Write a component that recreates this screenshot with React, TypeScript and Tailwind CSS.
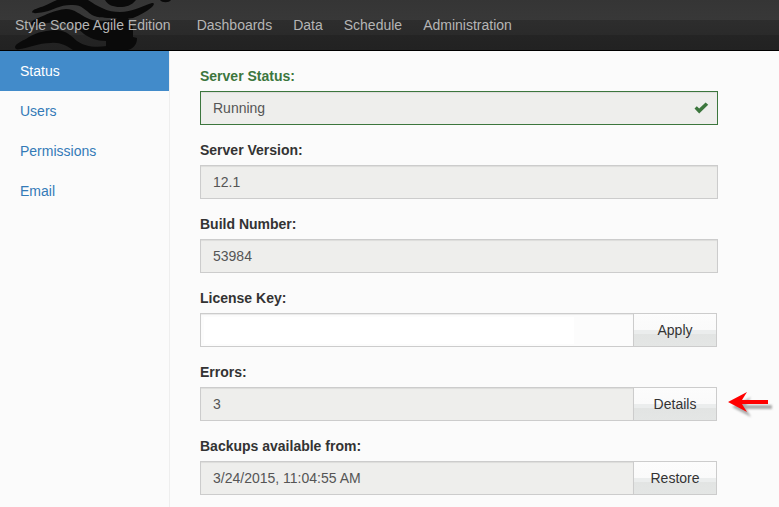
import type { ReactNode } from "react";

const fieldBase =
  "block h-[34px] w-full min-w-0 border px-3 py-1.5 text-sm leading-5 text-[#555] shadow-[inset_0_1px_1px_rgba(0,0,0,0.075)] outline-none";

const navItems = ["Dashboards", "Data", "Schedule", "Administration"];
const sideItems = ["Status", "Users", "Permissions", "Email"];

function Logo() {
  return (
    <svg
      className="absolute left-0 top-0 h-[50px] w-[190px]"
      viewBox="0 0 190 50"
      fill="#0a0a0a"
      aria-hidden="true"
    >
      <path d="M32 12 C33 9 39 8 44 6 C49 4 52 2 57 0 H88 C93 3 97 6 102 8 C108 11 114 12 120 12 C132 12 142 6 152 3 C155 3 154 5 152 7 C146 12 140 15 133 18 C128 19 122 19 115 18 C105 18 98 18 92 15 C85 10 82 5 73 5 C61 4 54 10 44 12 C38 13 33 14 32 12Z" />
      <path d="M31 24 C31 21 34 20 38 18 C46 15 54 10 66 9 C75 9 80 15 87 18 C97 23 109 22 120 17 H127 C131 21 133 26 133 31 V37 L137 38 C137 44 134 48 128 50 H106 V41 C96 41 90 38 84 34 C77 28 73 24 64 24 C55 21 46 23 38 25 C34 26 31 26 31 24Z" />
      <path d="M15 47 C16 43 23 41 29 37 C38 32 47 30 57 30 C67 31 71 36 77 41 C84 46 94 48 107 46 L110 50 H73 C66 45 59 42 51 43 C38 43 28 48 20 49 C17 50 15 49 15 47Z" />
      <path d="M105 0 H136 C131 6 126 7 120 7 C113 7 108 5 105 0Z M160 0 H171 C169 3 162 3 160 0Z" />
    </svg>
  );
}

function Field({
  id,
  label,
  value,
  children,
}: {
  id: string;
  label: string;
  value: string;
  children?: ReactNode;
}) {
  const valid = id === "status";
  const editable = id === "license";
  return (
    <div className="mb-[15px]">
      <label
        htmlFor={id}
        className={`mb-[5px] block text-sm font-bold leading-5 ${valid ? "text-[#3c763d]" : "text-[#333]"}`}
      >
        {label}
      </label>
      <div className={`relative flex ${children ? "mr-px" : ""}`}>
        <input
          id={id}
          defaultValue={value}
          readOnly={!editable}
          className={`${fieldBase} ${valid ? "border-[#3c763d]" : "border-[#ccc]"} ${editable ? "bg-[#fcfcfc] bg-[linear-gradient(#fff,#fff)] bg-[length:370px_27px] bg-[position:3px_3px] bg-no-repeat" : "bg-[#eeeeec]"}`}
        />
        {valid && (
          <svg
            className="absolute right-[9px] top-[11px] h-3 w-[15px]"
            viewBox="0 0 15 12"
            fill="#3c763d"
            aria-hidden="true"
          >
            <path d="M0.5 6.5 L2.8 4.3 L5.2 6.6 L11.6 0.4 L14.2 2.8 L5.2 11.6Z" />
          </svg>
        )}
        {children}
      </div>
    </div>
  );
}

function ActionButton({ children }: { children: string }) {
  return (
    <button
      type="button"
      className="-ml-px h-[34px] w-[84px] shrink-0 border border-[#ccc] bg-[linear-gradient(#fcfcfc_0,#fafafa_50%,#ebeded_50%,#ebeded_62%,#e2e4e3_62%,#e4e6e5_100%)] text-sm leading-5 text-[#333]"
    >
      {children}
    </button>
  );
}

function Arrow() {
  return (
    <svg
      className="absolute left-full top-0 ml-2 h-8 w-[52px]"
      viewBox="0 0 52 32"
      aria-hidden="true"
    >
      <path
        d="M3 16 L22 6 L17 14 H43 V18 H17 L22 26Z"
        transform="translate(4 4)"
        fill="#777"
        opacity="0.6"
        className="blur-[1px]"
      />
      <path d="M3 15 L22 5 L17 13 H43 V17 H17 L22 25Z" fill="#f00" />
    </svg>
  );
}

export default function App() {
  return (
    <div className="flex min-h-screen flex-col bg-[#fbfbfb] font-['Liberation_Sans',Arial,sans-serif] text-sm leading-5">
      <header className="relative h-[51px] border-b border-black bg-[linear-gradient(#353535_0,#383838_40%,#2d2d2d_40%,#2a2a2a_70%,#242424_70%,#222_100%)]">
        <Logo />
        <nav className="relative flex h-[50px] items-center text-[#b5b5b5]">
          <a href="#home" className="px-[15px]">
            Style Scope Agile Edition
          </a>
          <div className="ml-[11px] flex gap-[21px]">
            {navItems.map((item) => (
              <a key={item} href={`#${item}`}>
                {item}
              </a>
            ))}
          </div>
        </nav>
      </header>
      <div className="flex flex-1">
        <aside className="w-[170px] shrink-0 border-r border-[#eee]">
          {sideItems.map((item) => (
            <a
              key={item}
              href={`#${item}`}
              className={`block px-5 py-[10px] ${item === "Status" ? "bg-[#428bca] text-white" : "text-[#337ab7]"}`}
            >
              {item}
            </a>
          ))}
        </aside>
        <main className="flex-1 pl-[30px] pr-[60px] pt-[15px]">
          <form className="-mb-[3px] max-w-[518px]">
            <Field id="status" label="Server Status:" value="Running" />
            <Field id="version" label="Server Version:" value="12.1" />
            <Field id="build" label="Build Number:" value="53984" />
            <Field id="license" label="License Key:" value="">
              <ActionButton>Apply</ActionButton>
            </Field>
            <Field id="errors" label="Errors:" value="3">
              <ActionButton>Details</ActionButton>
              <Arrow />
            </Field>
            <Field id="backups" label="Backups available from:" value="3/24/2015, 11:04:55 AM">
              <ActionButton>Restore</ActionButton>
            </Field>
          </form>
        </main>
      </div>
    </div>
  );
}
